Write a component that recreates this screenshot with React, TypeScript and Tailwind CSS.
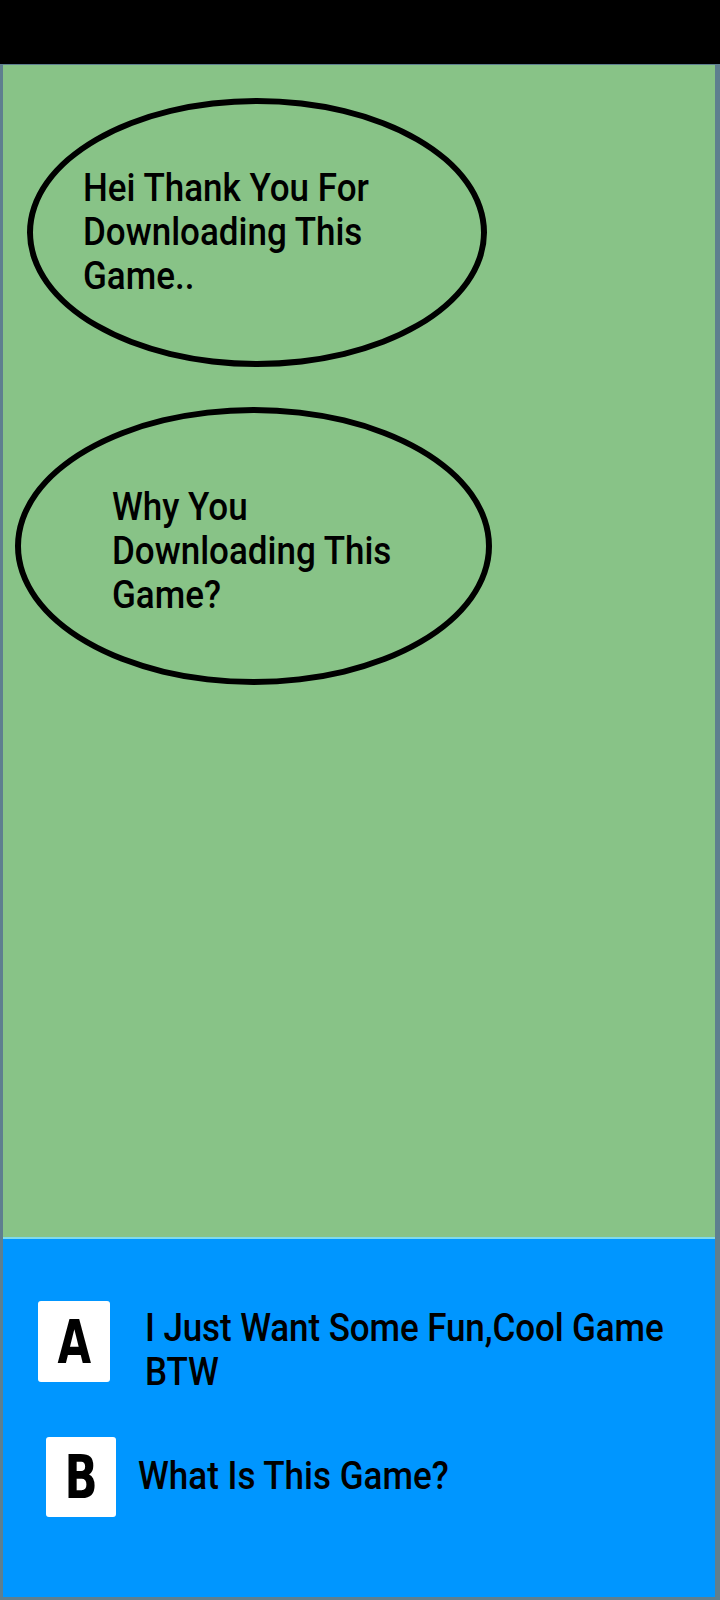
import React from "react";

function Bubble({
  className,
  textClassName,
  lines,
}: {
  className: string;
  textClassName: string;
  lines: string[];
}) {
  return (
    <div className={`relative rounded-[50%] border-[6px] border-black ${className}`}>
      <div
        className={`absolute text-black text-[35px] font-medium leading-[44px] ${textClassName}`}
      >
        {lines.map((l) => (
          <div key={l} className="origin-left scale-y-110 whitespace-nowrap">
            {l}
          </div>
        ))}
      </div>
    </div>
  );
}

function Option({
  letter,
  boxClassName,
  children,
}: {
  letter: string;
  boxClassName: string;
  children: React.ReactNode;
}) {
  return (
    <div className="flex items-start">
      <div
        className={`bg-white rounded-[3px] flex items-center justify-center shrink-0 ${boxClassName}`}
      >
        <span className="text-[58px] font-semibold leading-none text-black scale-x-75 scale-y-105 font-['DejaVu_Sans',sans-serif]">
          {letter}
        </span>
      </div>
      {children}
    </div>
  );
}

export default function App() {
  return (
    <div
      className="w-[720px] h-[1600px] bg-black flex flex-col"
      style={{ fontFamily: "Roboto, 'Noto Sans', sans-serif" }}
    >
      {/* status bar area */}
      <div className="h-[64px] shrink-0 bg-black" />

      <div className="flex-1 flex flex-col border-[#5e7f8f] border-t border-l-[3px] border-r-[5px] border-b-[3px]">
        {/* story area */}
        <div className="h-[1172px] shrink-0 bg-[#88c387] flex flex-col">
          <Bubble
            className="ml-[24px] mt-[33px] w-[460px] h-[269px]"
            textClassName="left-[50px] top-[63px]"
            lines={["Hei Thank You For", "Downloading This", "Game.."]}
          />
          <Bubble
            className="ml-[12px] mt-[40px] w-[477px] h-[278px]"
            textClassName="left-[91px] top-[73px]"
            lines={["Why You", "Downloading This", "Game?"]}
          />
        </div>
        <div className="h-[2px] shrink-0 bg-[#7ed9ee]" />

        {/* answers */}
        <div className="flex-1 bg-[#0096ff] flex flex-col pt-[62px]">
          <Option letter="A" boxClassName="ml-[35px] w-[72px] h-[81px]">
            <div className="ml-[35px] mt-[6px] w-[540px] text-[35px] font-medium tracking-[-0.1px] leading-[44px] text-black">
              <div className="origin-left scale-y-110 whitespace-nowrap">I Just Want Some Fun,Cool Game</div>
              <div className="origin-left scale-y-110">BTW</div>
            </div>
          </Option>
          <div className="mt-[42px]">
            <Option letter="B" boxClassName="ml-[43px] w-[70px] h-[80px]">
              <div className="ml-[22px] mt-[18px] text-[35px] font-medium leading-[44px] text-black">
                <div className="origin-left scale-y-110">What Is This Game?</div>
              </div>
            </Option>
          </div>
        </div>
      </div>
    </div>
  );
}
